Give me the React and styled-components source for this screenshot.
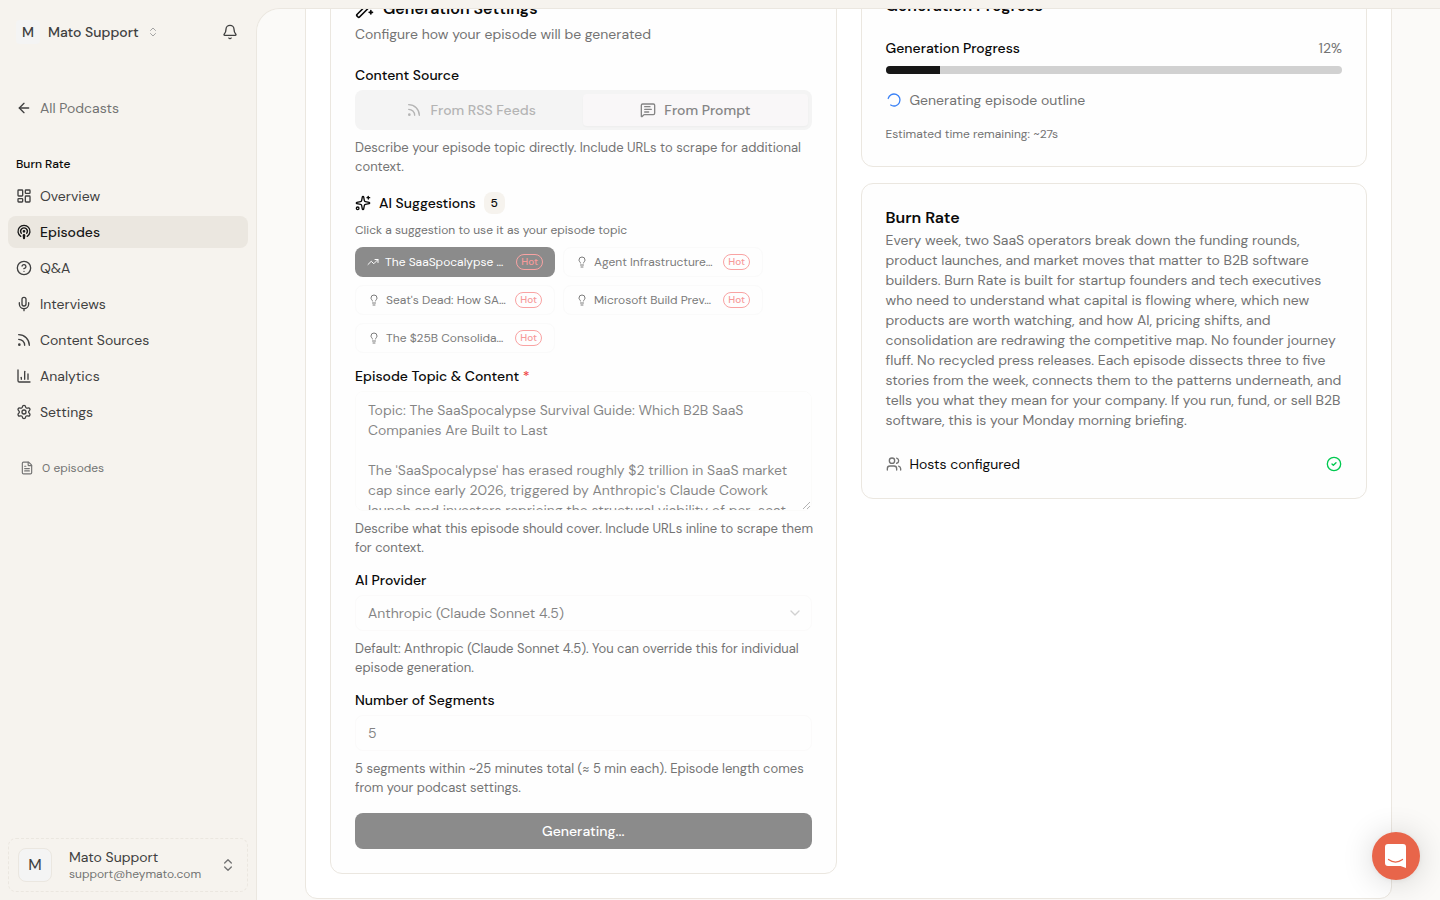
import React, { useLayoutEffect, useRef } from "react";
import styled, { createGlobalStyle, css, keyframes } from "styled-components";
import {
  ArrowLeft, Bell, ChartColumn, ChevronDown, ChevronsUpDown, CircleCheck,
  CircleQuestionMark, FileText, LayoutDashboard, Lightbulb, LoaderCircle,
  MessageSquareText, Mic, Podcast, Rss, Settings, Sparkles, TrendingUp, Users,
  WandSparkles,
} from "lucide-react";

const color = {
  page: "#f6f3ee",
  main: "#fbfaf8",
  border: "#ebe7e0",
  ink: "#0a0a0a",
  primary: "#171717",
  nav: "#404040",
  muted: "#737373",
  soft: "#f4f4f4",
};

const GlobalStyle = createGlobalStyle`
  *, *::before, *::after { box-sizing: border-box; }
  body {
    margin: 0;
    background: ${color.page};
    color: ${color.ink};
    font-family: "DM Sans", Inter, "Liberation Sans", sans-serif;
    font-size: 14px;
    line-height: 20px;
    -webkit-font-smoothing: antialiased;
  }
  button, input, select, textarea { font: inherit; color: inherit; margin: 0; }
  h1, h2, h3, p, ul { margin: 0; padding: 0; }
  svg { flex-shrink: 0; }
`;

const Shell = styled.div`
  display: grid;
  grid-template-columns: 256px minmax(0, 1fr);
  height: 100vh;
`;

/* Sidebar */

const Sidebar = styled.aside`
  display: flex;
  flex-direction: column;
  min-height: 0;
  padding: 16px 8px 8px;
  color: ${color.nav};
`;

const SidebarTop = styled.div`
  display: flex;
  align-items: center;
  justify-content: space-between;
  height: 32px;
  padding: 0 10px 0 8px;
`;

const PlainButton = styled.button`
  display: flex;
  align-items: center;
  gap: 8px;
  padding: 0;
  border: 0;
  background: none;
  font-weight: 500;
  svg { color: ${(p) => (p.$faint ? "#a3a3a3" : color.nav)}; }
`;

const Avatar = styled.span`
  display: grid;
  place-items: center;
  width: ${(p) => (p.$large ? 34 : 24)}px;
  height: ${(p) => (p.$large ? 34 : 24)}px;
  border-radius: ${(p) => (p.$large ? 8 : 4)}px;
  border: ${(p) => (p.$large ? `1px solid ${color.border}` : "0")};
  background: ${color.soft};
  font-size: ${(p) => (p.$large ? 16 : 14)}px;
  font-weight: ${(p) => (p.$large ? 400 : 500)};
`;

const BackLink = styled.a`
  display: flex;
  align-items: center;
  gap: 8px;
  height: 32px;
  margin-top: 44px;
  padding: 0 8px;
  color: ${color.muted};
  text-decoration: none;
  svg { color: ${color.nav}; }
`;

const NavTitle = styled.h2`
  margin: 32px 8px 8px;
  color: ${color.ink};
  font-size: 12px;
  font-weight: 500;
  line-height: 16px;
`;

const NavList = styled.ul`
  display: flex;
  flex-direction: column;
  gap: 4px;
  list-style: none;
`;

const NavLink = styled.a`
  display: flex;
  align-items: center;
  gap: 8px;
  height: 32px;
  padding: 0 8px;
  border-radius: 8px;
  color: inherit;
  text-decoration: none;
  ${(p) => p.$active && css`
    background: ${color.border};
    color: ${color.primary};
    font-weight: 500;
  `}
`;

const EpisodeCount = styled.p`
  display: flex;
  align-items: center;
  gap: 8px;
  margin: 32px 12px 0;
  color: ${color.muted};
  font-size: 12px;
  line-height: 16px;
`;

const Account = styled.button`
  display: flex;
  align-items: center;
  gap: 17px;
  height: 54px;
  margin-top: auto;
  padding: 0 11px 0 9px;
  border: 1px dashed ${color.border};
  border-radius: 8px;
  background: none;
  text-align: left;
  > svg { color: ${color.muted}; }
`;

const AccountText = styled.span`
  display: flex;
  flex: 1;
  flex-direction: column;
  line-height: 18px;
`;

const Email = styled.span`
  color: ${color.muted};
  font-size: 12px;
  line-height: 16px;
`;

/* Main area */

const Main = styled.main`
  margin-top: 8px;
  min-height: 0;
  overflow-y: auto;
  scrollbar-width: none;
  padding: 24px 48px;
  border: 1px solid ${color.border};
  border-width: 1px 0 0 1px;
  border-top-left-radius: 24px;
  background: ${color.main};
`;

const Panel = styled.div`
  display: grid;
  grid-template-columns: repeat(2, minmax(0, 1fr));
  align-items: start;
  gap: 24px;
  padding: 24px;
  border: 1px solid ${color.border};
  border-radius: 12px;
  background: #fff;
`;

const Column = styled.div`
  display: flex;
  flex-direction: column;
  gap: 16px;
`;

const Card = styled.section`
  display: flex;
  flex-direction: column;
  padding: 24px;
  border: 1px solid ${color.border};
  border-radius: 12px;
  background: #fefefe;
`;

const CardTitle = styled.h2`
  display: flex;
  align-items: center;
  gap: 8px;
  font-size: 16px;
  font-weight: 600;
  line-height: ${(p) => (p.$tall ? 26 : 20)}px;
`;

const Muted = styled.p`
  margin-top: 2px;
  color: ${color.muted};
`;

const Form = styled.form`
  display: flex;
  flex-direction: column;
  gap: 16px;
  margin-top: 24px;
`;

const Field = styled.div`
  display: flex;
  flex-direction: column;
  gap: 8px;
`;

const Label = styled.label`
  font-weight: 500;
  line-height: 14px;
`;

const Required = styled.span`
  color: #ef4444;
`;

const Hint = styled.p`
  margin-right: -4px;
  color: ${color.muted};
  font-size: 13px;
  line-height: 19px;
`;

const Tabs = styled.div`
  display: grid;
  grid-template-columns: 1fr 1fr;
  height: 40px;
  padding: 4px;
  border-radius: 8px;
  background: ${color.soft};
`;

const Tab = styled.button`
  display: flex;
  align-items: center;
  justify-content: center;
  gap: 8px;
  border: 0;
  border-radius: 4px;
  background: ${(p) => (p.$active ? "#f9f7f8" : "none")};
  box-shadow: ${(p) => (p.$active ? "0 1px 2px rgba(0, 0, 0, 0.03)" : "none")};
  color: ${(p) => (p.$active ? "#858585" : "#b4b4b4")};
  font-weight: 500;
`;

const SuggestionTitle = styled.h3`
  display: flex;
  align-items: center;
  gap: 8px;
  font-size: 14px;
  font-weight: 500;
  line-height: 22px;
`;

const Count = styled.span`
  padding: 0 7px;
  border-radius: 8px;
  background: ${color.page};
  font-size: 12px;
`;

const SuggestionHint = styled.p`
  color: ${color.muted};
  font-size: 12px;
  line-height: 17px;
`;

const Suggestions = styled.div`
  display: flex;
  flex-wrap: wrap;
  gap: 8px;
`;

const Suggestion = styled.button`
  display: flex;
  align-items: center;
  gap: 6px;
  width: 200px;
  height: 30px;
  padding: 0 12px;
  border: ${(p) => (p.$active ? "0" : "1px solid #fafafa")};
  border-radius: 8px;
  background: ${(p) => (p.$active ? "#8b8b8b" : "#fefefe")};
  color: ${(p) => (p.$active ? "#fff" : "#7b7b7b")};
  font-size: 12px;
`;

const SuggestionText = styled.span`
  flex: 1;
  text-align: left;
  white-space: nowrap;
`;

const Hot = styled.span`
  padding: 0 4px;
  border: 1px solid #f9a3a3;
  border-radius: 8px;
  color: #f79a9a;
  font-size: 10px;
  font-weight: 500;
  line-height: 14px;
`;

const control = css`
  width: 100%;
  border: 1px solid #f9f8f7;
  border-radius: 8px;
  background: #fff;
  color: ${color.ink};
  opacity: 0.5;
`;

const TextArea = styled.textarea`
  ${control}
  display: block;
  height: 120px;
  padding: 8px 12px;
  resize: vertical;
  &::-webkit-scrollbar { width: 0; height: 0; }
`;

const Input = styled.input`
  ${control}
  height: 36px;
  padding: 0 12px;
  appearance: textfield;
  &::-webkit-inner-spin-button { appearance: none; }
`;

const SelectBox = styled.div`
  display: grid;
  align-items: center;
  > * { grid-area: 1 / 1; }
  > svg {
    justify-self: end;
    margin-right: 9px;
    color: #a3a3a3;
    pointer-events: none;
  }
`;

const Select = styled.select`
  ${control}
  height: 36px;
  padding: 0 12px;
  appearance: none;
`;

const Submit = styled.button`
  height: 36px;
  border: 0;
  border-radius: 8px;
  background: #8b8b8b;
  color: #fff;
  font-weight: 500;
`;

const ProgressHead = styled.div`
  display: flex;
  align-items: center;
  justify-content: space-between;
  margin: 20px 0 6px;
  color: ${color.muted};
  line-height: 24px;
`;

const ProgressLabel = styled.span`
  color: ${color.ink};
  font-weight: 500;
`;

const Track = styled.div`
  height: 8px;
  overflow: hidden;
  border-radius: 4px;
  background: #d1d1d1;
`;

const Fill = styled.div`
  height: 100%;
  background: ${color.primary};
`;

const turn = keyframes`
  to { rotate: 555deg; }
`;

const Spinner = styled(LoaderCircle)`
  color: #3b82f6;
  rotate: 195deg;
  &:hover { animation: ${turn} 1s linear infinite; }
`;

const StatusRow = styled.p`
  display: flex;
  align-items: center;
  gap: 8px;
  margin: 16px 0;
  color: ${color.muted};
`;

const Remaining = styled.p`
  color: ${color.muted};
  font-size: 12px;
  line-height: 16px;
`;

const HostsRow = styled.div`
  display: flex;
  align-items: center;
  gap: 8px;
  margin-top: 24px;
  svg:first-child { color: ${color.muted}; }
  svg:last-child { margin-left: auto; color: #00c950; }
`;

const ChatButton = styled.button`
  position: fixed;
  right: 20px;
  bottom: 20px;
  display: grid;
  place-items: center;
  width: 48px;
  height: 48px;
  padding: 0;
  border: 0;
  border-radius: 50%;
  background: #e8654a;
  box-shadow: 0 1px 6px rgba(0, 0, 0, 0.06), 0 2px 32px rgba(0, 0, 0, 0.16);
`;

const navItems = [
  ["Overview", LayoutDashboard],
  ["Episodes", Podcast],
  ["Q&A", CircleQuestionMark],
  ["Interviews", Mic],
  ["Content Sources", Rss],
  ["Analytics", ChartColumn],
  ["Settings", Settings],
];

const suggestions = [
  "The SaaSpocalypse …",
  "Agent Infrastructure…",
  "Seat's Dead: How SA…",
  "Microsoft Build Prev…",
  "The $25B Consolida…",
];

const topic = `Topic: The SaaSpocalypse Survival Guide: Which B2B SaaS Companies Are Built to Last

The 'SaaSpocalypse' has erased roughly $2 trillion in SaaS market cap since early 2026, triggered by Anthropic's Claude Cowork launch and investors repricing the structural viability of per-seat`;

const progress = 12;

export default function App() {
  const main = useRef(null);

  useLayoutEffect(() => {
    main.current.scrollTop = 87;
  }, []);

  return (
    <>
      <GlobalStyle />
      <Shell>
        <Sidebar>
          <SidebarTop>
            <PlainButton type="button" $faint>
              <Avatar>M</Avatar>
              Mato Support
              <ChevronsUpDown size={12} />
            </PlainButton>
            <PlainButton type="button" aria-label="Notifications">
              <Bell size={16} />
            </PlainButton>
          </SidebarTop>
          <BackLink href="#podcasts">
            <ArrowLeft size={16} />
            All Podcasts
          </BackLink>
          <nav aria-label="Burn Rate">
            <NavTitle>Burn Rate</NavTitle>
            <NavList>
              {navItems.map(([name, Icon]) => (
                <li key={name}>
                  <NavLink href={`#${name}`} $active={name === "Episodes"}>
                    <Icon size={16} />
                    {name}
                  </NavLink>
                </li>
              ))}
            </NavList>
          </nav>
          <EpisodeCount>
            <FileText size={14} />
            0 episodes
          </EpisodeCount>
          <Account type="button">
            <Avatar $large>M</Avatar>
            <AccountText>
              Mato Support
              <Email>support@heymato.com</Email>
            </AccountText>
            <ChevronsUpDown size={16} />
          </Account>
        </Sidebar>

        <Main ref={main}>
          <Panel>
            <Card>
              <CardTitle $tall>
                <WandSparkles size={20} />
                Generation Settings
              </CardTitle>
              <Muted>Configure how your episode will be generated</Muted>
              <Form>
                <Field>
                  <Label as="span" id="source">Content Source</Label>
                  <Tabs role="tablist" aria-labelledby="source">
                    <Tab type="button" role="tab" aria-selected="false" disabled>
                      <Rss size={16} />
                      From RSS Feeds
                    </Tab>
                    <Tab type="button" role="tab" aria-selected="true" disabled $active>
                      <MessageSquareText size={16} />
                      From Prompt
                    </Tab>
                  </Tabs>
                  <Hint>
                    Describe your episode topic directly. Include URLs to scrape for additional context.
                  </Hint>
                </Field>
                <Field>
                  <SuggestionTitle>
                    <Sparkles size={16} />
                    AI Suggestions
                    <Count>5</Count>
                  </SuggestionTitle>
                  <SuggestionHint>Click a suggestion to use it as your episode topic</SuggestionHint>
                  <Suggestions>
                    {suggestions.map((text, i) => (
                      <Suggestion key={text} type="button" disabled $active={i === 0}>
                        {i === 0 ? <TrendingUp size={12} /> : <Lightbulb size={12} />}
                        <SuggestionText>{text}</SuggestionText>
                        <Hot>Hot</Hot>
                      </Suggestion>
                    ))}
                  </Suggestions>
                </Field>
                <Field>
                  <Label htmlFor="topic">
                    Episode Topic &amp; Content <Required>*</Required>
                  </Label>
                  <TextArea id="topic" defaultValue={topic} disabled />
                  <Hint>
                    Describe what this episode should cover. Include URLs inline to scrape them for context.
                  </Hint>
                </Field>
                <Field>
                  <Label htmlFor="provider">AI Provider</Label>
                  <SelectBox>
                    <Select id="provider" disabled>
                      <option>Anthropic (Claude Sonnet 4.5)</option>
                    </Select>
                    <ChevronDown size={16} />
                  </SelectBox>
                  <Hint>
                    Default: Anthropic (Claude Sonnet 4.5). You can override this for individual episode generation.
                  </Hint>
                </Field>
                <Field>
                  <Label htmlFor="segments">Number of Segments</Label>
                  <Input id="segments" type="number" defaultValue="5" disabled />
                  <Hint>
                    5 segments within ~25 minutes total (≈ 5 min each). Episode length comes from your podcast settings.
                  </Hint>
                </Field>
                <Submit type="submit" disabled>Generating...</Submit>
              </Form>
            </Card>

            <Column>
              <Card>
                <CardTitle>Generation Progress</CardTitle>
                <ProgressHead>
                  <ProgressLabel id="progress">Generation Progress</ProgressLabel>
                  <span>{progress}%</span>
                </ProgressHead>
                <Track role="progressbar" aria-labelledby="progress" aria-valuenow={progress}>
                  <Fill style={{ width: `${progress}%` }} />
                </Track>
                <StatusRow>
                  <Spinner size={16} />
                  Generating episode outline
                </StatusRow>
                <Remaining>Estimated time remaining: ~27s</Remaining>
              </Card>
              <Card>
                <CardTitle>Burn Rate</CardTitle>
                <Muted>
                  Every week, two SaaS operators break down the funding rounds, product launches, and
                  market moves that matter to B2B software builders. Burn Rate is built for startup
                  founders and tech executives who need to understand what capital is flowing where,
                  which new products are worth watching, and how AI, pricing shifts, and consolidation
                  are redrawing the competitive map. No founder journey fluff. No recycled press
                  releases. Each episode dissects three to five stories from the week, connects them to
                  the patterns underneath, and tells you what they mean for your company. If you run,
                  fund, or sell B2B software, this is your Monday morning briefing.
                </Muted>
                <HostsRow>
                  <Users size={16} />
                  Hosts configured
                  <CircleCheck size={16} />
                </HostsRow>
              </Card>
            </Column>
          </Panel>
        </Main>
      </Shell>
      <ChatButton type="button" aria-label="Open chat">
        <svg width="24" height="26" viewBox="0 0 24 26" fill="none">
          <path d="M4 1h15a3 3 0 0 1 3 3v21l-5.500-2H4a3 3 0 0 1-3-3V4a3 3 0 0 1 3-3z" fill="#fff" />
          <path d="M4.500 16.500c4.500 3.300 9.500 3.300 14 0" stroke="#e8654a" strokeWidth="1.300" strokeLinecap="round" />
        </svg>
      </ChatButton>
    </>
  );
}
